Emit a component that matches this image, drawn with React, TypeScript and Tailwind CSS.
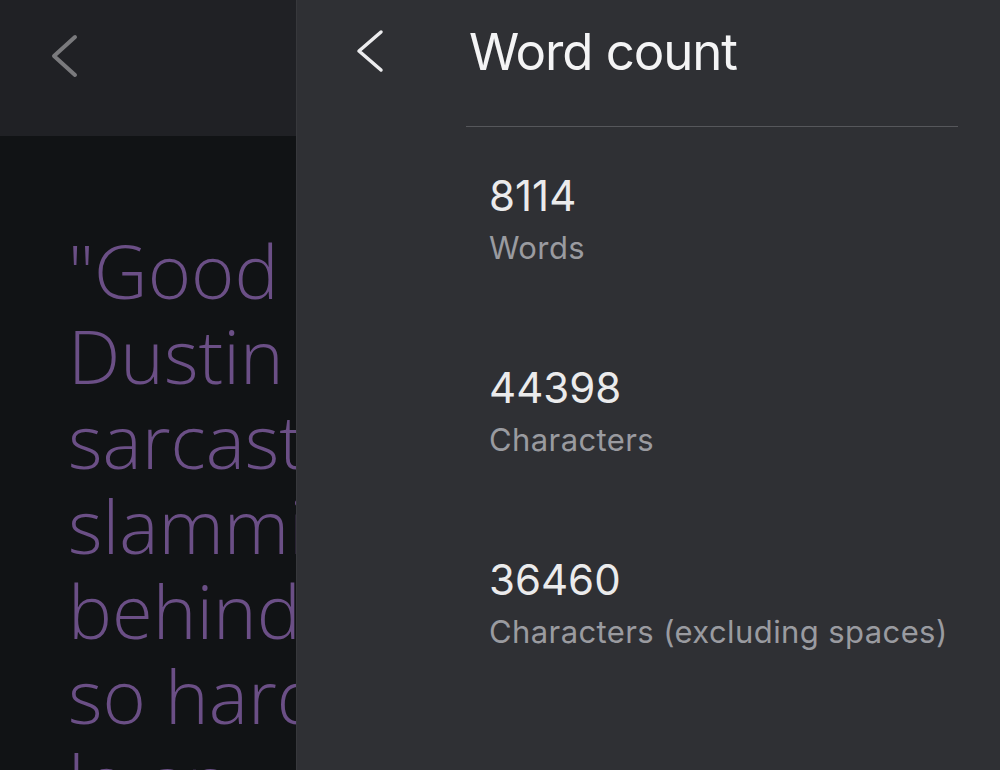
import React from "react";

const Chevron = ({ color, className }: { color: string; className?: string }) => (
  <svg width="28" height="46" viewBox="0 0 28 46" className={className} fill="none">
    <polyline points="25,4 4,23 25,42" stroke={color} strokeWidth="4" strokeLinecap="round" strokeLinejoin="round" />
  </svg>
);

const lines = ['"Good morning,"', "Dustin said", "sarcastically,", "slamming the door", "behind him", "so hard", "lo an"];

const stats = [
  { n: "8114", label: "Words" },
  { n: "44398", label: "Characters" },
  { n: "36460", label: "Characters (excluding spaces)" },
];

export default function App() {
  return (
    <div className="relative w-[1000px] h-[770px] overflow-hidden bg-[#111315]">
      {/* Underlying editor screen */}
      <div className="flex flex-col h-full">
        <div className="h-[136px] bg-[#202125] shrink-0 pl-[50px] pt-[33px]">
          <Chevron color="#7a7a7d" />
        </div>
        <div
          className="flex-1 pl-[68px] pt-[92px] text-[#6b4f86] text-[74px] leading-[85px] font-light whitespace-nowrap"
          style={{ fontFamily: "'Open Sans', Lato, sans-serif" }}
        >
          {lines.map((l) => (
            <div key={l}>{l}</div>
          ))}
        </div>
      </div>

      {/* Word count drawer */}
      <div
        className="absolute top-0 bottom-0 left-[296px] right-0 bg-[#2f3034] border-l border-[#37383c]"
        style={{ fontFamily: "Inter, Roboto, 'Noto Sans', sans-serif" }}
      >
        <div className="flex items-start pt-[26px] pl-[59px]">
          <svg width="28" height="44" viewBox="0 0 28 44" fill="none" className="mt-[3px]">
            <polyline points="25,3 3,22 25,41" stroke="#ececee" strokeWidth="3.5" strokeLinecap="round" strokeLinejoin="round" />
          </svg>
          <div className="ml-[85px] text-[51px] leading-[51px] text-[#f4f4f5] tracking-[-1.1px]">Word count</div>
        </div>
        <div className="mt-[49px] ml-[169px] mr-[42px] h-px bg-[#56575b]" />
        <div className="pt-[48px] pl-[192px] flex flex-col gap-[104px]">
          {stats.map((s) => (
            <div key={s.label} className="flex flex-col">
              <div className="text-[42px] leading-[42px] text-[#ebebec]">{s.n}</div>
              <div className="mt-[15px] text-[31px] leading-[31px] tracking-[0.4px] text-[#9a9ba0]">{s.label}</div>
            </div>
          ))}
        </div>
      </div>
    </div>
  );
}
